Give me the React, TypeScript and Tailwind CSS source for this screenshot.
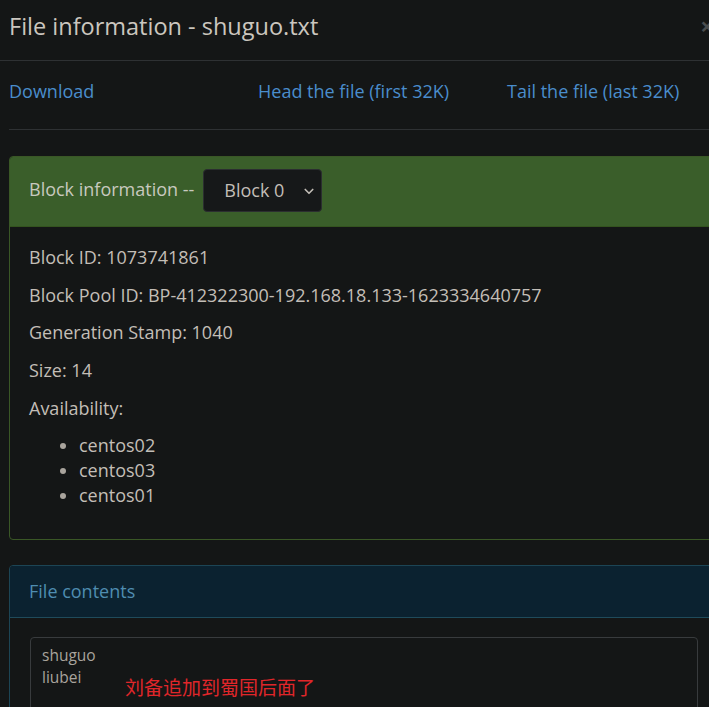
import React from "react";

export default function App() {
  const font = { fontFamily: '"Open Sans", "Noto Sans CJK SC", sans-serif' };
  return (
    <div className="w-[709px] h-[707px] overflow-hidden bg-[#141616] relative" style={font}>
      <div className="w-[728px] text-[#c3beb7]">
        {/* Header */}
        <div className="h-[61px] border-b border-[#2e3133] pl-[9px] pr-[14px] pt-[10px] flex justify-between items-start">
          <h4 className="text-[23.5px] leading-[32px] text-[#cbc6bf]">File information - shuguo.txt</h4>
          <span className="text-[24px] leading-[32px] font-bold text-[#4a4d4f]">×</span>
        </div>

        {/* Body */}
        <div className="px-[9px]">
          <div className="grid grid-cols-[249px_249px_249px] pt-[17px] text-[18px] leading-[27px] text-[#4a8dcc]">
            <a>Download</a>
            <a>Head the file (first 32K)</a>
            <a>Tail the file (last 32K)</a>
          </div>
          <div className="mt-[24px] border-t border-[#2e3133]" />

          {/* Block information panel */}
          <div className="mt-[26px] w-[710px] border border-[#3a5726] rounded-[4px]">
            <div className="h-[70px] bg-[#3a5e2a] border-b border-[#34531f] px-[19px] pt-[12px] flex items-start rounded-t-[3px]">
              <span className="mt-[7px] text-[18px] leading-[27px] text-[#c8c9bf]">Block information --</span>
              <div className="ml-[9px] h-[43px] w-[119px] bg-[#161819] border border-[#2b2e30] rounded-[4px] flex items-center justify-between pl-[20px] pr-[6px]">
                <span className="text-[18px] leading-[27px] text-[#c3beb7]">Block 0</span>
                <svg width="12" height="12" viewBox="0 0 16 16" fill="none">
                  <path d="M3 6l5 5 5-5" stroke="#c3beb7" strokeWidth="2.2" strokeLinecap="round" strokeLinejoin="round" />
                </svg>
              </div>
            </div>
            <div className="px-[19px] pt-[17px] pb-[20px] text-[18px]">
              <p className="leading-[27px] mb-[11px]">Block ID: 1073741861</p>
              <p className="leading-[27px] mb-[10px]">Block Pool ID: BP-412322300-192.168.18.133-1623334640757</p>
              <p className="leading-[27px] mb-[11px]">Generation Stamp: 1040</p>
              <p className="leading-[27px] mb-[11px]">Size: 14</p>
              <p className="leading-[27px] mb-[11px]">Availability:</p>
              <ul className="list-disc pl-[50px] leading-[25px] mb-[11px] marker:text-[#a9a49d]">
                <li>centos02</li>
                <li>centos03</li>
                <li>centos01</li>
              </ul>
            </div>
          </div>

          {/* File contents panel */}
          <div className="mt-[25px] w-[710px] border border-[#1c4555] rounded-[4px] h-[200px]">
            <div className="h-[52px] bg-[#0b2230] border-b border-[#1f4b5b] px-[19px] flex items-center rounded-t-[3px]">
              <span className="text-[18px] leading-[27px] text-[#4f8db0]">File contents</span>
            </div>
            <div className="pt-[19px] px-[20px]">
              <div className="border border-[#383b3d] rounded-[4px] h-[120px] pl-[11px] pt-[6px] text-[15.5px] leading-[22px] text-[#a9a49d]">
                <div>shuguo</div>
                <div>liubei</div>
              </div>
            </div>
          </div>
        </div>
      </div>

      {/* Annotation overlay */}
      <div className="absolute left-[125px] top-[675px] text-[19px] leading-[24px] text-[#e0262a]" style={{ fontFamily: '"Noto Sans CJK SC", sans-serif' }}>
        刘备追加到蜀国后面了
      </div>
    </div>
  );
}
